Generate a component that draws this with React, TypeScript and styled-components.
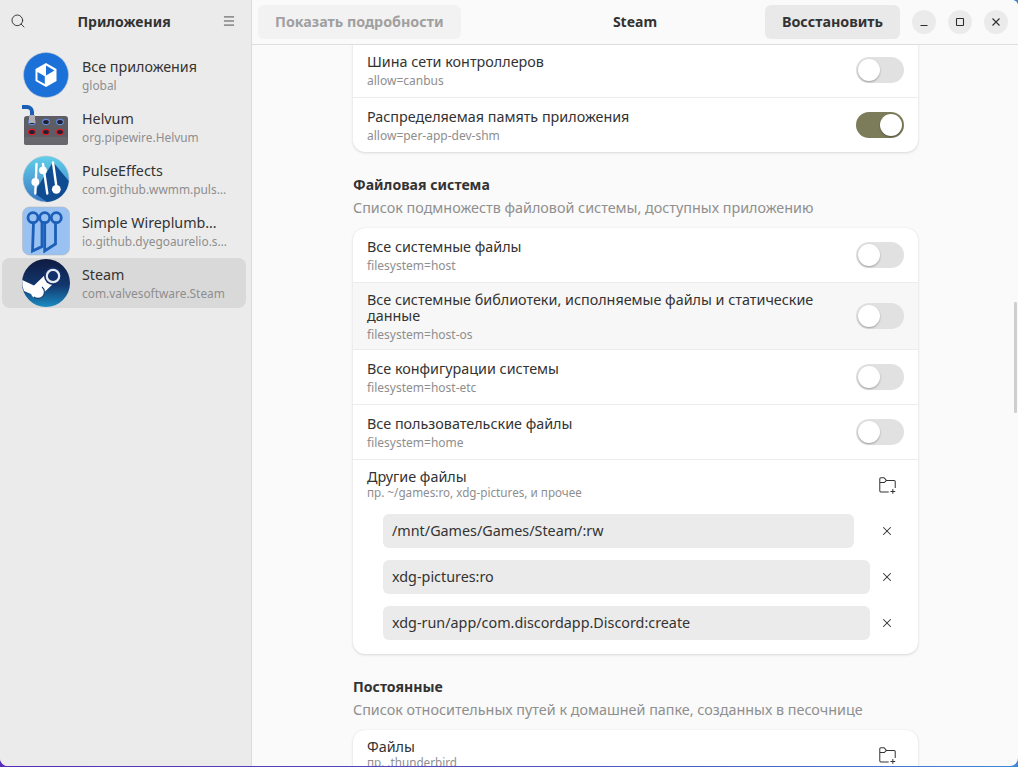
import styled, { createGlobalStyle } from "styled-components";
import { Search, Menu, X } from "lucide-react";

const GlobalStyle = createGlobalStyle`
  html, body {
    margin: 0;
    padding: 0;
    height: 100%;
    overflow: hidden;
    background: linear-gradient(90deg, #5a2bb8, #4a5fc8 70%, #3f86d8);
  }
  * { box-sizing: border-box; }
`;

const Window = styled.div`
  display: flex;
  width: 1018px;
  height: 766px;
  border-radius: 0 6px 8px 8px;
  overflow: hidden;
  background: #fafafa;
  color: #2e2e2e;
  font-family: "Noto Sans", "Open Sans", sans-serif;
  font-size: 14.35px;
`;

const Sidebar = styled.aside`
  display: flex;
  flex-direction: column;
  width: 252px;
  flex-shrink: 0;
  background: #ebebeb;
  border-right: 1px solid #dcdcdc;
`;

const SideHeader = styled.div`
  display: flex;
  align-items: center;
  justify-content: space-between;
  height: 44px;
  padding: 0 15px 2px 10px;
`;

const SideTitle = styled.div`
  font-weight: 700;
  font-size: 14px;
  color: #333;
`;

const AppList = styled.div`
  display: flex;
  flex-direction: column;
  gap: 2px;
  padding: 6px 5px 0 2px;
`;

const AppRow = styled.div<{ $selected?: boolean }>`
  display: flex;
  align-items: center;
  gap: 11px;
  height: 50px;
  padding-left: 19px;
  border-radius: 8px;
  background: ${(p) => (p.$selected ? "#d9d9d9" : "transparent")};
`;

const AppIcon = styled.svg`
  width: 50px;
  height: 50px;
  flex-shrink: 0;
`;

const AppText = styled.div`
  display: flex;
  flex-direction: column;
  min-width: 0;
  width: 146px;
`;

const AppName = styled.div`
  max-width: 140px;
  font-size: 14.3px;
  line-height: 20px;
  color: #333;
  white-space: nowrap;
  overflow: hidden;
  text-overflow: ellipsis;
`;

const AppId = styled(AppName)`
  max-width: none;
  font-size: 11.9px;
  line-height: 17px;
  color: #8e8e8e;
`;

const Main = styled.main`
  flex: 1;
  display: flex;
  flex-direction: column;
  min-width: 0;
  position: relative;
`;

const HeaderBar = styled.header`
  display: grid;
  grid-template-columns: 1fr auto 1fr;
  align-items: center;
  height: 45px;
  flex-shrink: 0;
  padding: 0 10px 1px;
  background: #fafafa;
  border-bottom: 1px solid #dedede;
  position: relative;
  z-index: 2;
`;

const HeaderStart = styled.div`
  display: flex;
  margin-left: -4px;
`;

const HeaderEnd = styled.div`
  display: flex;
  align-items: center;
  justify-content: flex-end;
`;

const TextButton = styled.button<{ $disabled?: boolean }>`
  height: 34px;
  padding: 0 17px;
  border: 0;
  border-radius: 6px;
  font: 700 14.3px "Noto Sans", sans-serif;
  white-space: nowrap;
  background: ${(p) => (p.$disabled ? "#f2f2f2" : "#e9e9e9")};
  color: ${(p) => (p.$disabled ? "#a0a0a0" : "#333")};
`;

const WindowTitle = styled.div`
  text-align: center;
  font-weight: 700;
  font-size: 14px;
  color: #333;
`;

const WindowButtons = styled.div`
  display: flex;
  gap: 12px;
  margin-left: 12px;
`;

const CircleButton = styled.div`
  display: flex;
  align-items: center;
  justify-content: center;
  width: 24px;
  height: 24px;
  border-radius: 50%;
  background: #ebebeb;
  color: #333;
`;

const Glyph = styled.svg`
  width: 16px;
  height: 16px;
  fill: none;
  stroke: #2e2e2e;
  stroke-width: 1.1;
`;

const Scroller = styled.div`
  flex: 1;
  overflow: hidden;
  display: flex;
  justify-content: center;
  padding-left: 1px;
`;

const Column = styled.div`
  display: flex;
  flex-direction: column;
  width: 565px;
  margin-top: -2px;
`;

const Card = styled.div`
  flex-shrink: 0;
  background: #fff;
  border-radius: 12px;
  box-shadow: 0 1px 3px rgba(0, 0, 0, 0.13), 0 0 1px rgba(0, 0, 0, 0.1);
`;

const TopCard = styled(Card)`
  border-radius: 0 0 12px 12px;
`;

const SectionTitle = styled.div`
  margin-top: 23px;
  font-weight: 700;
  font-size: 14.1px;
  line-height: 20px;
  color: #333;
`;

const SectionNote = styled.div`
  margin: 3px 0 10px;
  line-height: 20px;
  color: #8f8f8f;
`;

const Row = styled.div<{ $hover?: boolean }>`
  display: flex;
  align-items: center;
  justify-content: space-between;
  min-height: 55px;
  padding: 9px 14px 7px;
  border-bottom: 1px solid #ececec;
  background: ${(p) => (p.$hover ? "#f7f7f7" : "transparent")};
  &:last-child {
    border-bottom: 0;
    min-height: 54px;
  }
`;

const RowText = styled.div`
  display: flex;
  flex-direction: column;
  max-width: 470px;
`;

const RowTitle = styled.div`
  line-height: 16px;
  color: #333;
`;

const RowSub = styled.div`
  margin-top: 3px;
  font-size: 12px;
  line-height: 15px;
  color: #8e8e8e;
`;

const Switch = styled.div<{ $on?: boolean }>`
  display: flex;
  justify-content: ${(p) => (p.$on ? "flex-end" : "flex-start")};
  width: 48px;
  height: 26px;
  padding: 2px;
  border-radius: 13px;
  flex-shrink: 0;
  margin-top: -2px;
  background: ${(p) => (p.$on ? "#7c7b5a" : "#e1e1e1")};
`;

const Knob = styled.div`
  width: 22px;
  height: 22px;
  border-radius: 50%;
  background: #fff;
  box-shadow: 0 1px 2px rgba(0, 0, 0, 0.3);
`;

const FilesBlock = styled.div`
  padding: 6px 14px 14px;
`;

const FilesHead = styled.div`
  display: flex;
  align-items: center;
  justify-content: space-between;
  height: 36px;
  margin-bottom: 12px;
`;

const FilesHint = styled.div`
  font-size: 11.7px;
  line-height: 15px;
  color: #8e8e8e;
`;

const FolderButton = styled.svg`
  width: 19px;
  height: 19px;
  margin: 2px 7px 0 0;
`;

const PathRow = styled.div`
  display: flex;
  align-items: center;
  padding-left: 16px;
  margin-bottom: 12px;
  &:last-child { margin-bottom: 0; }
`;

const PathField = styled.div<{ $narrow?: boolean }>`
  flex: ${(p) => (p.$narrow ? "0 0 471px" : "0 0 487px")};
  height: 34px;
  line-height: 34px;
  padding-left: 9px;
  border-radius: 6px;
  background: #ebebeb;
  color: #333;
`;

const RemoveSlot = styled.div`
  flex: 1;
  display: flex;
  justify-content: flex-end;
  padding-right: 10px;
  color: #333;
`;

const Scrollbar = styled.div`
  position: absolute;
  right: 1px;
  top: 302px;
  width: 3px;
  height: 111px;
  border-radius: 1px;
  background: #cfcfcf;
`;

function FolderPlus() {
  return (
    <FolderButton viewBox="0 0 16 16" fill="none" stroke="#333" strokeWidth="0.85">
      <path d="M9 13.5H2.5a1 1 0 0 1-1-1v-10a1 1 0 0 1 1-1h2.6l2 2.2h6.4a1 1 0 0 1 1 1V10M1.5 5.5h3.8l1.8-1.8" />
      <path d="M12.5 11v4M10.5 13h4" />
    </FolderButton>
  );
}

function BoxIcon() {
  return (
    <AppIcon viewBox="0 0 50 50">
      <circle cx="25" cy="25" r="22.5" fill="#1c71d8" stroke="#c0c8d0" strokeWidth="0.6" />
      <path d="M25 13 35.5 19V31L25 37 14.5 31V19z" fill="#fff" />
      <path d="M25 15.5 33.5 20.5 25 25.5z" fill="#1c71d8" />
      <path d="M16.5 22 23.8 26.3V34L16.5 30z" fill="#1c71d8" />
    </AppIcon>
  );
}

function HelvumIcon() {
  const cols = [11, 25, 39];
  return (
    <AppIcon viewBox="0 0 50 50">
      <rect x="3" y="14" width="44" height="29" rx="3" fill="#5e5c64" />
      <rect x="3" y="35" width="44" height="8" rx="2" fill="#69676e" />
      <path d="M1 5h5a5 5 0 0 1 5 5v5" fill="none" stroke="#1a5fb4" strokeWidth="4" />
      {cols.map((x) => (
        <g key={x}>
          <ellipse cx={x} cy="20" rx="3.4" ry="2.6" fill="#241f31" stroke="#5d8fdc" strokeWidth="1.1" />
          <ellipse cx={x} cy="30" rx="3.4" ry="2.6" fill="#241f31" stroke="#e01b24" strokeWidth="1.1" />
        </g>
      ))}
      <rect x="8" y="13" width="6" height="8" fill="#b0aeb4" />
    </AppIcon>
  );
}

function PulseIcon() {
  return (
    <AppIcon viewBox="0 0 50 50">
      <defs>
        <linearGradient id="pulseBg" x1="0" y1="0" x2="0" y2="1">
          <stop offset="0" stopColor="#62d0ea" />
          <stop offset="1" stopColor="#3a78c4" />
        </linearGradient>
      </defs>
      <circle cx="25" cy="25" r="23" fill="url(#pulseBg)" stroke="#b8c4cc" strokeWidth="0.6" />
      <path d="M32 8 47.8 27A23 23 0 0 1 26 48L13 39z" fill="#0f4c92" />
      <g stroke="#fff" strokeWidth="2.4" strokeLinecap="round">
        <path d="M15.5 10 14.3 39.5" />
        <path d="M22 10 26.3 39.5" />
        <path d="M32 8.5 35.3 32" />
      </g>
      <circle cx="14.3" cy="28" r="3.9" fill="#fff" />
      <circle cx="22" cy="16.3" r="3.9" fill="#fff" />
      <circle cx="35.3" cy="35.3" r="4.4" fill="#fff" />
    </AppIcon>
  );
}

function WireIcon() {
  return (
    <AppIcon viewBox="0 0 50 50">
      <rect x="1.5" y="1" width="47" height="48" rx="7" fill="#99c1f1" stroke="#b4b8c0" strokeWidth="0.6" />
      <g fill="none" stroke="#1c5fb8" strokeWidth="2.8">
        <circle cx="12" cy="11.7" r="5" />
        <circle cx="23.7" cy="11.7" r="5" />
        <circle cx="35.3" cy="11.7" r="5" />
        <path d="M12.5 16.5 11.5 45 21 40.5V16.5" />
        <path d="M23.7 16.5V45L34.5 38V16.5" />
      </g>
    </AppIcon>
  );
}

function SteamIcon() {
  return (
    <AppIcon viewBox="0 0 50 50">
      <defs>
        <linearGradient id="steamBg" x1="0" y1="0" x2="0" y2="1">
          <stop offset="0" stopColor="#0f1b40" />
          <stop offset="0.55" stopColor="#12376e" />
          <stop offset="1" stopColor="#1a8cc2" />
        </linearGradient>
      </defs>
      <circle cx="25" cy="25" r="24" fill="url(#steamBg)" />
      <path d="M1.2 22 13 27.5 25.5 15.5 32.5 25.5 23.5 34A7 7 0 0 1 10 36L3 33A24 24 0 0 1 1.2 22z" fill="#fff" />
      <circle cx="32" cy="18" r="9" fill="#14306a" />
      <circle cx="32" cy="18" r="6.2" fill="none" stroke="#e6ebf2" strokeWidth="2.2" />
      <path d="M13 39A6 6 0 0 0 21 29" fill="none" stroke="#173a72" strokeWidth="1.1" />
    </AppIcon>
  );
}

const apps = [
  { name: "Все приложения", id: "global", icon: <BoxIcon /> },
  { name: "Helvum", id: "org.pipewire.Helvum", icon: <HelvumIcon /> },
  { name: "PulseEffects", id: "com.github.wwmm.pulseeffects", icon: <PulseIcon /> },
  { name: "Simple Wireplumber GUI", id: "io.github.dyegoaurelio.simple-wireplumber-gui", icon: <WireIcon /> },
  { name: "Steam", id: "com.valvesoftware.Steam", icon: <SteamIcon />, selected: true },
];

const fsRows = [
  { title: "Все системные файлы", sub: "filesystem=host" },
  { title: "Все системные библиотеки, исполняемые файлы и статические данные", sub: "filesystem=host-os", hover: true },
  { title: "Все конфигурации системы", sub: "filesystem=host-etc" },
  { title: "Все пользовательские файлы", sub: "filesystem=home" },
];

const paths = [
  { value: "/mnt/Games/Games/Steam/:rw", narrow: true },
  { value: "xdg-pictures:ro" },
  { value: "xdg-run/app/com.discordapp.Discord:create" },
];

export default function App() {
  return (
    <>
      <GlobalStyle />
      <Window>
        <Sidebar>
          <SideHeader>
            <Search size={16} strokeWidth={1.4} />
            <SideTitle>Приложения</SideTitle>
            <Menu size={14} strokeWidth={1.4} />
          </SideHeader>
          <AppList>
            {apps.map((a) => (
              <AppRow key={a.name} $selected={a.selected}>
                {a.icon}
                <AppText>
                  <AppName>{a.name}</AppName>
                  <AppId>{a.id}</AppId>
                </AppText>
              </AppRow>
            ))}
          </AppList>
        </Sidebar>
        <Main>
          <HeaderBar>
            <HeaderStart>
              <TextButton $disabled>Показать подробности</TextButton>
            </HeaderStart>
            <WindowTitle>Steam</WindowTitle>
            <HeaderEnd>
              <TextButton>Восстановить</TextButton>
              <WindowButtons>
                <CircleButton>
                  <Glyph viewBox="0 0 16 16"><path d="M4.5 11.5h7" /></Glyph>
                </CircleButton>
                <CircleButton>
                  <Glyph viewBox="0 0 16 16"><rect x="4.5" y="4.5" width="7" height="7" rx="0.5" /></Glyph>
                </CircleButton>
                <CircleButton>
                  <Glyph viewBox="0 0 16 16"><path d="M4.5 4.5l7 7M11.5 4.5l-7 7" /></Glyph>
                </CircleButton>
              </WindowButtons>
            </HeaderEnd>
          </HeaderBar>
          <Scroller>
            <Column>
              <TopCard>
                <Row>
                  <RowText>
                    <RowTitle>Шина сети контроллеров</RowTitle>
                    <RowSub>allow=canbus</RowSub>
                  </RowText>
                  <Switch><Knob /></Switch>
                </Row>
                <Row>
                  <RowText>
                    <RowTitle>Распределяемая память приложения</RowTitle>
                    <RowSub>allow=per-app-dev-shm</RowSub>
                  </RowText>
                  <Switch $on><Knob /></Switch>
                </Row>
              </TopCard>
              <SectionTitle>Файловая система</SectionTitle>
              <SectionNote>Список подмножеств файловой системы, доступных приложению</SectionNote>
              <Card>
                {fsRows.map((r) => (
                  <Row key={r.sub} $hover={r.hover}>
                    <RowText>
                      <RowTitle>{r.title}</RowTitle>
                      <RowSub>{r.sub}</RowSub>
                    </RowText>
                    <Switch><Knob /></Switch>
                  </Row>
                ))}
                <FilesBlock>
                  <FilesHead>
                    <div>
                      <RowTitle>Другие файлы</RowTitle>
                      <FilesHint>пр. ~/games:ro, xdg-pictures, и прочее</FilesHint>
                    </div>
                    <FolderPlus />
                  </FilesHead>
                  {paths.map((p) => (
                    <PathRow key={p.value}>
                      <PathField $narrow={p.narrow}>{p.value}</PathField>
                      <RemoveSlot><X size={14} strokeWidth={1.8} /></RemoveSlot>
                    </PathRow>
                  ))}
                </FilesBlock>
              </Card>
              <SectionTitle>Постоянные</SectionTitle>
              <SectionNote>Список относительных путей к домашней папке, созданных в песочнице</SectionNote>
              <Card>
                <FilesBlock>
                  <FilesHead>
                    <div>
                      <RowTitle>Файлы</RowTitle>
                      <FilesHint>пр. .thunderbird</FilesHint>
                    </div>
                    <FolderPlus />
                  </FilesHead>
                </FilesBlock>
              </Card>
            </Column>
          </Scroller>
          <Scrollbar />
        </Main>
      </Window>
    </>
  );
}
